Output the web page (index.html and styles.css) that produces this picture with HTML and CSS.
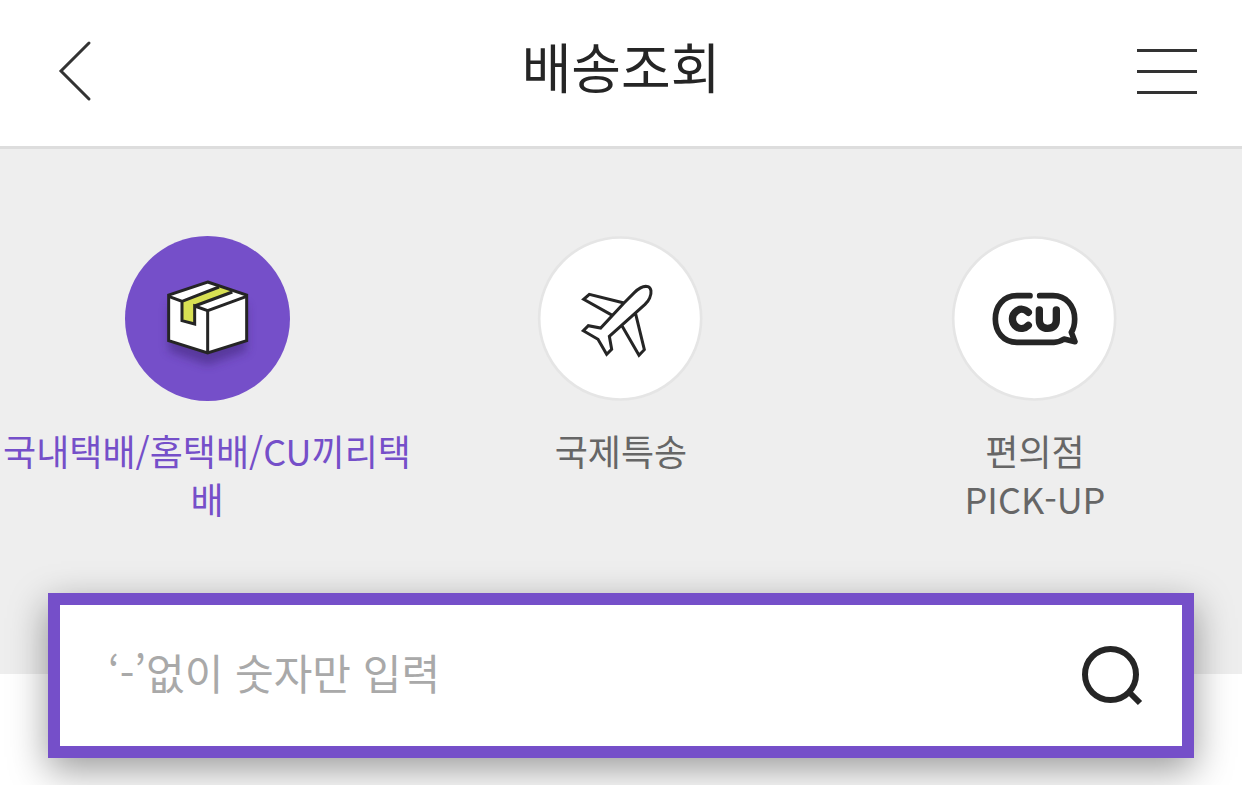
FILE: index.html
```html
<!DOCTYPE html>
<html lang="ko">
<head>
<meta charset="utf-8">
<meta name="viewport" content="width=device-width, initial-scale=1">
<title>배송조회</title>
<link rel="stylesheet" href="styles.css">
</head>
<body>
<header class="header">
  <button class="icon-button" type="button" aria-label="뒤로">
    <svg class="header-icon" viewBox="0 0 64 64" aria-hidden="true"><path d="M46 3 18 31 46 59" fill="none" stroke="#333" stroke-width="3" stroke-linecap="round"/></svg>
  </button>
  <h1 class="title">배송조회</h1>
  <button class="icon-button" type="button" aria-label="메뉴">
    <svg class="header-icon" viewBox="0 0 64 64" aria-hidden="true"><path d="M2 10.500H62M2 31.500H62M2 52.500H62" fill="none" stroke="#333" stroke-width="3"/></svg>
  </button>
</header>
<main class="main">
  <nav class="tabs" aria-label="배송 종류">
    <a class="tab tab-active" href="#domestic" aria-current="page">
      <svg class="tab-icon" viewBox="45 33 495 495" aria-hidden="true">
        <defs><filter id="box-shadow" x="-30%" y="-30%" width="160%" height="170%"><feGaussianBlur stdDeviation="14"/></filter></defs>
        <circle cx="292.500" cy="280.500" r="247.500" fill="#754fc9"/>
        <path d="M176 240H410V378L293 420 176 378Z" fill="#3b2470" opacity=".5" filter="url(#box-shadow)"/>
        <path d="M293 171 410 210V347L293 384 176 347V210Z" fill="#fff"/>
        <path d="M327 185 367 199 254 242V297L216 287V229Z" fill="#d8e053"/>
        <g fill="none" stroke="#252525" stroke-width="9">
          <path d="M293 171 410 210V347L293 384 176 347V210Z"/>
          <path d="M176 214 216 229V287L254 297V243L293 257 410 214M293 257V384M216 229 327 186M254 243 367 201"/>
        </g>
      </svg>
      <span class="tab-label">국내택배/홈택배/CU끼리택배</span>
    </a>
    <a class="tab" href="#international">
      <svg class="tab-icon" viewBox="43 33 495 495" aria-hidden="true">
        <circle cx="286.500" cy="280.500" r="243" fill="#fff" stroke="#e5e5e5" stroke-width="8"/>
        <path d="M298 234 329 203C344 188 359 182 370 185 380 189 382 203 375 219 372 227 367 232 361 238L254 334 261 373 246 388 220 343 176 317 191 302 228 309ZM298 234 194 208 177 223 263 271M332 263 359 374 343 391 291 301" fill="none" stroke="#252525" stroke-width="9"/>
      </svg>
      <span class="tab-label">국제특송</span>
    </a>
    <a class="tab" href="#pickup">
      <svg class="tab-icon" viewBox="40 33 495 495" aria-hidden="true">
        <circle cx="283.500" cy="280.500" r="243" fill="#fff" stroke="#e5e5e5" stroke-width="8"/>
        <g fill="none" stroke="#252525" stroke-linecap="round" stroke-linejoin="round">
          <path d="M271 212H232C190 212 167 244 167 282S190 352 232 352H343Q358 352 373 342L406 350 395 322C403 310 405 296 405 282 405 242 379 212 340 212H300" stroke-width="17"/>
          <path d="M266 262C255 250 240 251 231 258 214 270 214 294 231 306 241 313 256 311 266 301M299 255V285C299 302 308 310 324 310S350 302 350 285V255" stroke-width="22"/>
        </g>
      </svg>
      <span class="tab-label">편의점<br>PICK-UP</span>
    </a>
  </nav>
  <form class="search" role="search">
    <input class="search-input" type="text" inputmode="numeric" aria-label="운송장 번호" placeholder="‘-’없이 숫자만 입력">
    <button class="icon-button" type="submit" aria-label="검색">
      <svg class="search-icon" viewBox="0 0 64 64" aria-hidden="true"><g fill="none" stroke="#252525"><circle cx="30.500" cy="30.500" r="25.500" stroke-width="6"/><path d="M48 47 60 59" stroke-width="6"/></g></svg>
    </button>
  </form>
</main>
</body>
</html>
```
FILE: styles.css
```css
* {
  box-sizing: border-box;
}

body {
  min-height: 100vh;
  margin: 0;
  background: #fff;
  color: #252525;
  font-family: "Noto Sans CJK KR", sans-serif;
}

.header {
  display: flex;
  align-items: flex-end;
  justify-content: space-between;
  padding: 28px 43px 42px;
  border-bottom: 3px solid #ddd;
}

.title {
  margin: 0;
  font-size: 54px;
  font-weight: 400;
  line-height: 76px;
}

.icon-button {
  display: flex;
  padding: 0;
  border: 0;
  background: none;
  cursor: pointer;
}

.header-icon,
.search-icon {
  width: 64px;
  height: 64px;
}

.main {
  padding-bottom: 27px;
}

.tabs {
  display: grid;
  grid-template-columns: repeat(3, minmax(0, 1fr));
  padding: 87px 0 152px;
  background: #eee;
}

.tab {
  display: flex;
  flex-direction: column;
  align-items: center;
  gap: 25px;
  color: #666;
  text-align: center;
  text-decoration: none;
}

.tab-active {
  color: #754fc9;
}

.tab-icon {
  width: 165px;
  height: 165px;
  overflow: visible;
}

.tab-label {
  font-size: 36px;
  line-height: 48px;
}

.search {
  position: relative;
  display: flex;
  align-items: center;
  margin: -81px 48px 0;
  padding: 30px 38px 30px 48px;
  border: 12px solid #754fc9;
  background: #fff;
  box-shadow: 0 12px 36px rgba(0, 0, 0, 0.4);
}

.search-input {
  flex: 1;
  min-width: 0;
  height: 81px;
  padding: 0 0 8px;
  border: 0;
  outline: 0;
  background: none;
  color: #252525;
  font-family: inherit;
  font-size: 42px;
}

.search-input::placeholder {
  color: #a9a9a9;
  opacity: 1;
}
```
